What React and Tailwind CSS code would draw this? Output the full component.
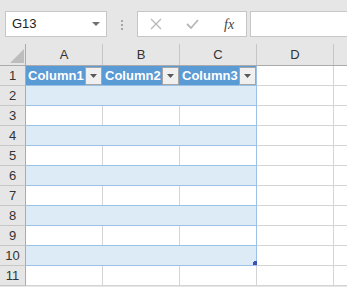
import React from "react";

const ROWS = [1, 2, 3, 4, 5, 6, 7, 8, 9, 10, 11];

function Dropdown() {
  return (
    <div className="absolute right-0 bottom-0 w-[17px] h-[18px] border border-[#a6a6a6] bg-[#f0f0f0] flex items-center justify-center">
      <svg width="7" height="4" viewBox="0 0 7 4">
        <path d="M0 0h7L3.5 4z" fill="#595959" />
      </svg>
    </div>
  );
}

function TableRow({ r }) {
  const header = r === 1;
  const band = r % 2 === 0;
  const bg = header ? "bg-[#5b9bd5]" : band ? "bg-[#ddebf7]" : "bg-white";
  const innerBorder = header ? "border-[#5b9bd5]" : band ? "border-[#ddebf7]" : "border-[#d4d4d4]";
  const names = ["Column1", "Column2", "Column3"];
  return (
    <div className={`flex w-[231px] h-[20px] border-b border-[#9bc2e6] ${bg}`}>
      {[0, 1, 2].map((i) => (
        <div
          key={i}
          className={`relative w-[77px] h-full border-r ${i === 2 ? "border-[#9bc2e6]" : innerBorder} flex items-center pl-[2px]`}
        >
          {header && (
            <>
              <span className="text-white font-bold text-[13px] leading-none">{names[i]}</span>
              <Dropdown />
            </>
          )}
          {r === 10 && i === 2 && (
            <svg className="absolute right-[-1px] bottom-0" width="4" height="4" viewBox="0 0 4 4">
              <path d="M1 0h3v4h-4v-3h1z" fill="#3f51b5" />
            </svg>
          )}
        </div>
      ))}
    </div>
  );
}

export default function App() {
  return (
    <div
      className="w-[347px] h-[287px] bg-[#e6e6e6] overflow-hidden text-[#262626]"
      style={{ fontFamily: '"Liberation Sans", Arial, sans-serif' }}
    >
      {/* toolbar */}
      <div className="h-[44px] flex items-start pt-[11px] pl-[5px]">
        <div className="w-[102px] h-[26px] bg-white border border-[#c6c6c6] flex items-center justify-between pl-[6px] pr-[6px]">
          <span className="text-[13px] text-[#222]">G13</span>
          <svg width="8" height="4" viewBox="0 0 8 4">
            <path d="M0 0h8L4 4z" fill="#707070" />
          </svg>
        </div>
        <div className="w-[30px] h-[26px] flex flex-col items-center justify-center gap-[2px] pt-[2px]">
          <div className="w-[2px] h-[2px] bg-[#a6a6a6]" />
          <div className="w-[2px] h-[2px] bg-[#a6a6a6]" />
          <div className="w-[2px] h-[2px] bg-[#a6a6a6]" />
        </div>
        <div className="w-[110px] h-[26px] bg-white border border-[#c6c6c6] flex items-center">
          <svg className="ml-[12px]" width="12" height="12" viewBox="0 0 12 12">
            <path d="M1 1L11 11M11 1L1 11" stroke="#b8b8b8" strokeWidth="1.3" />
          </svg>
          <svg className="ml-[24px]" width="13" height="10" viewBox="0 0 13 10">
            <path d="M1 5L5 9L12 1" stroke="#b8b8b8" strokeWidth="1.8" fill="none" />
          </svg>
          <span
            className="ml-[25px] text-[14px] italic text-[#444]"
            style={{ fontFamily: '"Liberation Serif", "Times New Roman", serif' }}
          >
            fx
          </span>
        </div>
        <div className="ml-[3px] flex-1 h-[26px] bg-white border border-[#c6c6c6] border-r-0" />
      </div>

      {/* column header */}
      <div className="flex h-[22px] border-b border-[#ababab]">
        <div className="relative w-[26px] h-full border-r border-[#ababab]">
          <svg className="absolute right-[1px] bottom-[2px]" width="14" height="14" viewBox="0 0 14 14">
            <path d="M14 0V14H0z" fill="#bdbdbd" />
          </svg>
        </div>
        {["A", "B", "C", "D"].map((c) => (
          <div
            key={c}
            className="w-[77px] h-full border-r border-[#c6c6c6] flex items-center justify-center text-[13px] text-[#333]"
          >
            {c}
          </div>
        ))}
        <div className="flex-1" />
      </div>

      {ROWS.map((r) => (
        <div key={r} className="flex h-[20px]">
          <div className="w-[26px] h-full border-r border-b border-r-[#ababab] border-b-[#c6c6c6] flex items-center justify-center text-[13px] text-[#333]">
            {r}
          </div>
          {r <= 10 ? (
            <TableRow r={r} />
          ) : (
            ["A", "B", "C"].map((c) => (
              <div key={c} className="w-[77px] h-full bg-white border-r border-b border-[#d4d4d4]" />
            ))
          )}
          <div className="w-[77px] h-full bg-white border-r border-b border-[#d4d4d4]" />
          <div className="flex-1 h-full bg-white border-b border-[#d4d4d4]" />
        </div>
      ))}
    </div>
  );
}
